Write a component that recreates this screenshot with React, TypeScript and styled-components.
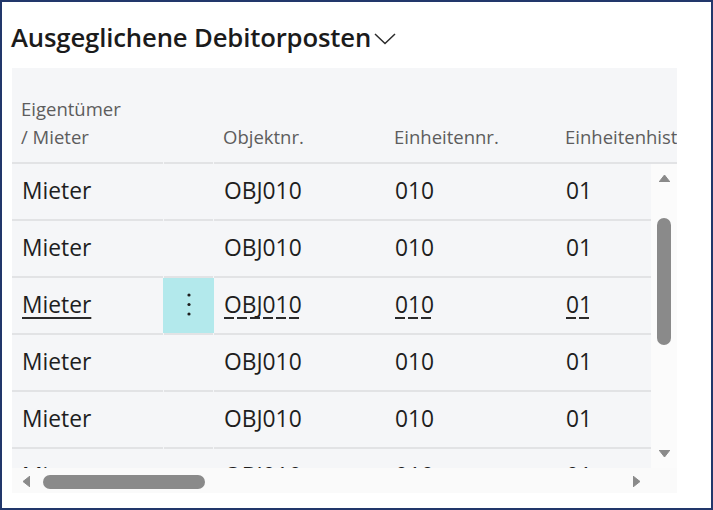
import React from "react";
import styled, { createGlobalStyle } from "styled-components";

const GlobalStyle = createGlobalStyle`
  html, body { margin: 0; padding: 0; background: #ffffff; }
  body { font-family: "Segoe UI", "Open Sans", "Noto Sans", sans-serif; }
  * { box-sizing: border-box; }
`;

const Frame = styled.div`
  width: 713px;
  height: 510px;
  border: 2px solid #22376b;
  background: #ffffff;
  padding: 19px 0 0 10px;
  overflow: hidden;
`;

const TitleRow = styled.div`
  display: flex;
  align-items: center;
  gap: 3px;
  margin-left: -1px;
  height: 34px;
`;

const Title = styled.h2`
  margin: 0;
  font-size: 25.7px;
  line-height: 34px;
  font-weight: 600;
  color: #1b1b1b;
  letter-spacing: -0.15px;
`;

const Chevron = styled.svg`
  width: 22px;
  height: 12px;
  margin-top: 2px;
`;

const Table = styled.div`
  margin-top: 13px;
  width: 665px;
  height: 425px;
  background: #f5f6f8;
  display: grid;
  grid-template-rows: 96px 304px 25px;
  overflow: hidden;
`;

const HeaderRow = styled.div`
  display: flex;
  overflow: hidden;
`;

const cols = [151, 51, 171, 171, 171];

const HeaderCell = styled.div<{ $w: number; $gap?: boolean }>`
  position: relative;
  flex: 0 0 ${(p) => p.$w}px;
  display: flex;
  flex-direction: column;
  justify-content: flex-end;
  padding: 0 9px 13px 9px;
  font-size: 18.5px;
  line-height: 28px;
  color: #5d5d5d;
  &::after {
    content: "";
    position: absolute;
    bottom: 0;
    height: 2px;
    left: ${(p) => (p.$gap ? "1px" : "0")};
    right: ${(p) => (p.$gap ? "1px" : "0")};
    background: #e2e3e5;
  }
`;

const HeaderLine = styled.span`
  display: block;
  white-space: nowrap;
`;

const BodyArea = styled.div`
  display: flex;
  overflow: hidden;
`;

const Rows = styled.div`
  flex: 1;
  overflow: hidden;
`;

const Row = styled.div`
  display: flex;
  height: 57px;
`;

const Cell = styled.div<{ $w: number }>`
  position: relative;
  flex: 0 0 ${(p) => p.$w}px;
  display: flex;
  align-items: center;
  padding: 0 9px 4px 10px;
  font-size: 22.8px;
  color: #1e1e1e;
  white-space: nowrap;
  &::after {
    content: "";
    position: absolute;
    bottom: 0;
    height: 2px;
    left: 0;
    right: 0;
    background: #e2e3e5;
  }
`;

const MenuCell = styled.div`
  position: relative;
  flex: 0 0 51px;
  display: flex;
  align-items: stretch;
  padding-bottom: 2px;
  &::after {
    content: "";
    position: absolute;
    bottom: 0;
    height: 2px;
    left: 1px;
    right: 1px;
    background: #e2e3e5;
  }
`;

const MenuButton = styled.div<{ $active?: boolean }>`
  flex: 1;
  display: flex;
  align-items: center;
  justify-content: center;
  padding-bottom: 2px;
  background: ${(p) => (p.$active ? "#b3e9ec" : "transparent")};
`;

const Value = styled.span<{ $link?: "solid" | "dashed" }>`
  ${(p) =>
    p.$link === "solid"
      ? `
    text-decoration: underline;
    text-decoration-thickness: 2px;
    text-underline-offset: 4px;
    text-decoration-color: #2a2a2a;
  `
      : ""}
  ${(p) =>
    p.$link === "dashed"
      ? `
    background-image: repeating-linear-gradient(to right, #2a2a2a 0 10px, transparent 10px 13px);
    background-repeat: no-repeat;
    background-size: 100% 2px;
    background-position: 0 calc(100% - 1px);
  `
      : ""}
`;

const VScroll = styled.div`
  flex: 0 0 26px;
  background: #fbfbfb;
  display: flex;
  flex-direction: column;
  align-items: center;
`;

const ArrowBtn = styled.div<{ $h: number }>`
  flex: 0 0 ${(p) => p.$h}px;
  display: flex;
  align-items: center;
  justify-content: center;
`;

const VThumb = styled.div<{ $top: number; $len: number }>`
  margin-top: ${(p) => p.$top}px;
  width: 14px;
  height: ${(p) => p.$len}px;
  border-radius: 7px;
  background: #8a8a8a;
`;

const Spacer = styled.div`
  flex: 1;
`;

const HScroll = styled.div`
  display: flex;
  align-items: center;
  padding-top: 2px;
  background: #fafafa;
`;

const HArrowBtn = styled.div<{ $w: number }>`
  flex: 0 0 ${(p) => p.$w}px;
  display: flex;
  align-items: center;
  justify-content: center;
`;

const HThumb = styled.div<{ $left: number; $len: number }>`
  margin-left: ${(p) => p.$left}px;
  width: ${(p) => p.$len}px;
  height: 14px;
  border-radius: 7px;
  background: #8a8a8a;
`;

const Corner = styled.div`
  flex: 0 0 26px;
`;

const Tri = ({ dir }: { dir: "up" | "down" | "left" | "right" }) => {
  const pts = {
    up: "0,7 5.5,0 11,7",
    down: "0,0 11,0 5.5,7",
    left: "7,0 7,11 0,5.5",
    right: "0,0 7,5.5 0,11",
  }[dir];
  const vertical = dir === "up" || dir === "down";
  return (
    <svg width={vertical ? 11 : 7} height={vertical ? 7 : 11} viewBox={vertical ? "0 0 11 7" : "0 0 7 11"}>
      <polygon points={pts} fill="#8a8a8a" strokeLinejoin="round" stroke="#8a8a8a" strokeWidth="1" />
    </svg>
  );
};

const Kebab = () => (
  <svg width="6" height="26" viewBox="0 0 6 26">
    <circle cx="3" cy="3" r="1.6" fill="#1e1e1e" />
    <circle cx="3" cy="12.5" r="1.6" fill="#1e1e1e" />
    <circle cx="3" cy="22" r="1.6" fill="#1e1e1e" />
  </svg>
);

type Entry = { role: string; obj: string; unit: string; hist: string };
const rows: Entry[] = Array.from({ length: 6 }, () => ({
  role: "Mieter",
  obj: "OBJ010",
  unit: "010",
  hist: "01",
}));

const ACTIVE = 2;

export default function App() {
  return (
    <>
      <GlobalStyle />
      <Frame>
        <TitleRow>
          <Title>Ausgeglichene Debitorposten</Title>
          <Chevron viewBox="0 0 22 12">
            <polyline points="1,1 11,10.5 21,1" fill="none" stroke="#2b2b2b" strokeWidth="1.5" />
          </Chevron>
        </TitleRow>
        <Table>
          <HeaderRow>
            <HeaderCell $w={cols[0]}>
              <HeaderLine>Eigentümer</HeaderLine>
              <HeaderLine>/ Mieter</HeaderLine>
            </HeaderCell>
            <HeaderCell $w={cols[1]} $gap />
            <HeaderCell $w={cols[2]}>
              <HeaderLine>Objektnr.</HeaderLine>
            </HeaderCell>
            <HeaderCell $w={cols[3]}>
              <HeaderLine>Einheitennr.</HeaderLine>
            </HeaderCell>
            <HeaderCell $w={cols[4]}>
              <HeaderLine>Einheitenhistorie</HeaderLine>
            </HeaderCell>
          </HeaderRow>
          <BodyArea>
            <Rows>
              {rows.map((r, i) => {
                const active = i === ACTIVE;
                return (
                  <Row key={i}>
                    <Cell $w={cols[0]}>
                      <Value $link={active ? "solid" : undefined}>{r.role}</Value>
                    </Cell>
                    <MenuCell>
                      <MenuButton $active={active}>{active && <Kebab />}</MenuButton>
                    </MenuCell>
                    <Cell $w={cols[2]}>
                      <Value $link={active ? "dashed" : undefined}>{r.obj}</Value>
                    </Cell>
                    <Cell $w={cols[3]}>
                      <Value $link={active ? "dashed" : undefined}>{r.unit}</Value>
                    </Cell>
                    <Cell $w={cols[4]}>
                      <Value $link={active ? "dashed" : undefined}>{r.hist}</Value>
                    </Cell>
                  </Row>
                );
              })}
            </Rows>
            <VScroll>
              <ArrowBtn $h={28}>
                <Tri dir="up" />
              </ArrowBtn>
              <VThumb $top={26} $len={127} />
              <Spacer />
              <ArrowBtn $h={30}>
                <Tri dir="down" />
              </ArrowBtn>
            </VScroll>
          </BodyArea>
          <HScroll>
            <HArrowBtn $w={28}>
              <Tri dir="left" />
            </HArrowBtn>
            <HThumb $left={3} $len={162} />
            <Spacer />
            <HArrowBtn $w={30}>
              <Tri dir="right" />
            </HArrowBtn>
            <Corner />
          </HScroll>
        </Table>
      </Frame>
    </>
  );
}
